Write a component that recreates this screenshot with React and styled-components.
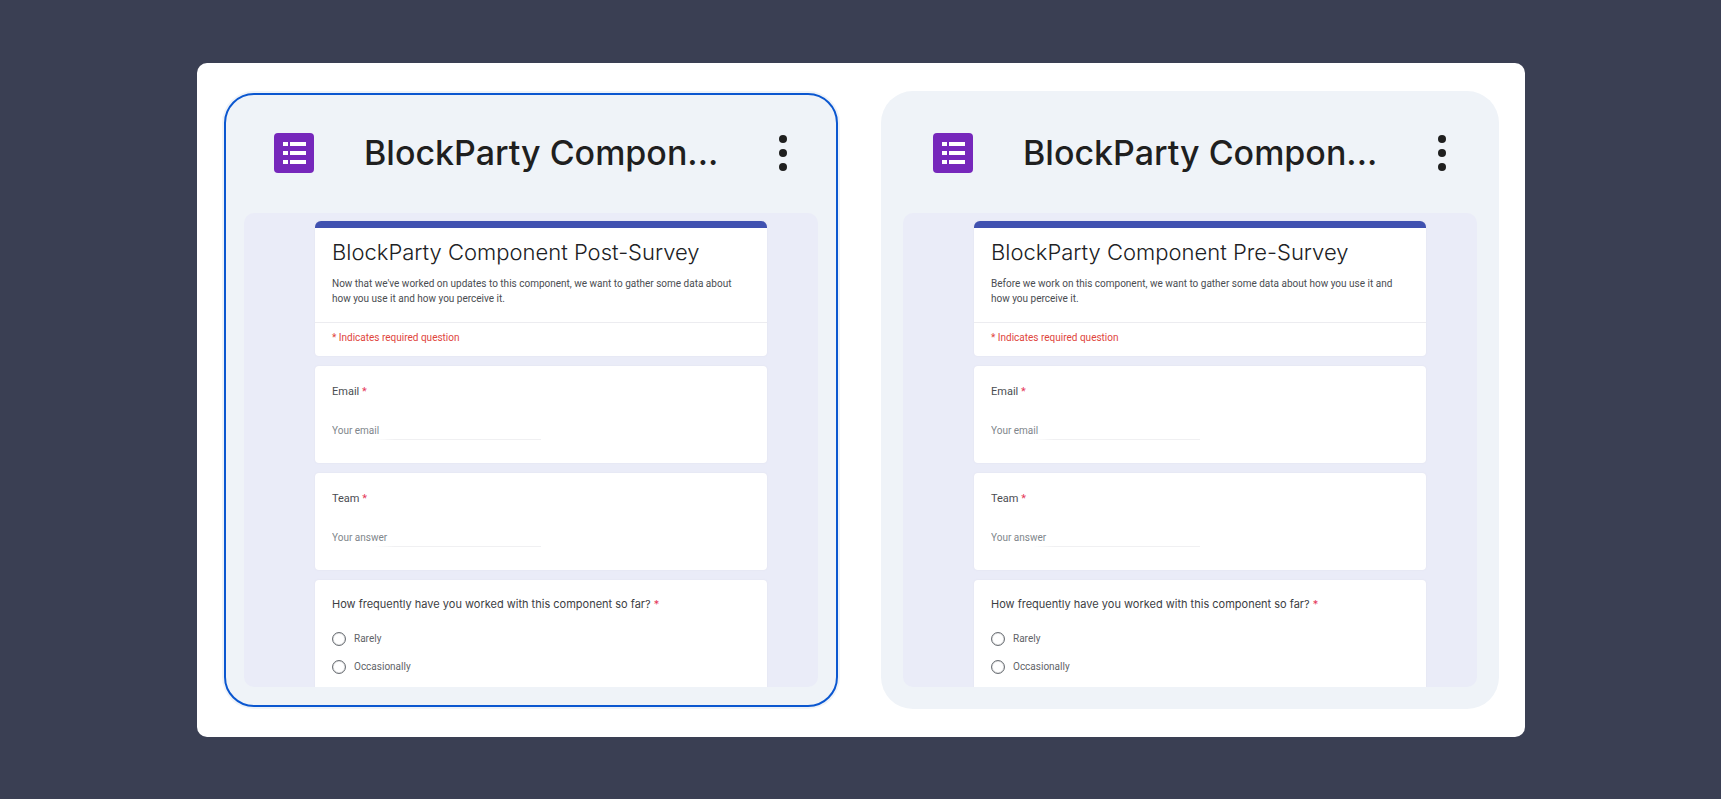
import React from 'react'
import styled, { createGlobalStyle, css } from 'styled-components'

const GlobalStyle = createGlobalStyle`
  *, *::before, *::after {
    box-sizing: border-box;
  }

  body {
    margin: 0;
    background: #3a3f53;
    font-family: Roboto, 'Liberation Sans', sans-serif;
  }

  h2, h3, p {
    margin: 0;
  }
`

const Page = styled.main`
  min-height: 100vh;
  padding: 63px 196px 62px 197px;
`

const Panel = styled.section`
  display: grid;
  grid-template-columns: repeat(2, minmax(0, 1fr));
  gap: 41px;
  padding: 28px 26px 28px 25px;
  border-radius: 10px;
  background: #fff;
`

const Card = styled.article`
  padding: 0 22px 22px;
  border-radius: 32px;
  background: #eff3f8;
  ${({ $selected }) =>
    $selected &&
    css`
      outline: 2px solid #0b57d0;
      outline-offset: -4px;
    `}
`

const CardHeader = styled.header`
  display: flex;
  align-items: center;
  height: 122px;
  padding: 2px 23px 0 30px;
`

const FormsIcon = styled.svg`
  flex: none;
  width: 40px;
  height: 40px;
`

const FileName = styled.h2`
  flex: 1;
  margin-left: 50px;
  color: #1f1f1f;
  font: 500 34px/44px Inter, 'Liberation Sans', sans-serif;
  white-space: nowrap;
`

const MenuButton = styled.button`
  display: flex;
  flex: none;
  padding: 0;
  border: 0;
  background: none;
  cursor: pointer;
`

const Preview = styled.div`
  aspect-ratio: 574 / 474;
  padding: 8px 51px 0 71px;
  overflow: hidden;
  border-radius: 10px;
  background: #eaecf8;
`

const Form = styled.form`
  display: flex;
  flex-direction: column;
  gap: 10px;
`

const Box = styled.div`
  padding: 19px 17px 0;
  border-radius: 4px;
  background: #fff;
  box-shadow: 0 0 2px #dfe1ec;
`

const Intro = styled(Box)`
  height: 135px;
  padding-top: 10px;
  border-top: 7px solid #4051b0;
  border-radius: 6px 6px 4px 4px;
`

const FieldBox = styled(Box)`
  height: 97px;
`

const ChoiceBox = styled(Box)`
  height: 140px;
  padding-top: 17px;
`

const FormTitle = styled.h3`
  color: #202124;
  font: 300 22px/28px Inter, sans-serif;
  white-space: nowrap;
`

const Description = styled.p`
  margin-top: 10px;
  color: #4a4d51;
  font-size: 10px;
  line-height: 15px;
`

const Required = styled.p`
  margin: 16px -17px 0;
  padding: 7px 17px 0;
  border-top: 1px solid #ececf0;
  color: #e0453c;
  font-size: 10px;
  line-height: 15px;
`

const FieldLabel = styled.label`
  display: block;
  color: #4a4d51;
  font-size: 11px;
  line-height: 14px;
`

const Question = styled.p`
  color: #3c4043;
  font: 11px/14px Inter, sans-serif;
`

const Star = styled.span`
  color: #e5395a;
`

const Field = styled.input`
  display: block;
  width: 50%;
  height: 20px;
  margin-top: 21px;
  padding: 0;
  border: 0;
  outline: 0;
  background: linear-gradient(90deg, transparent 20%, #f0f0f2 30%) bottom / 100% 1px no-repeat;
  color: #5f6368;
  font: 10px Roboto, sans-serif;

  &::placeholder {
    color: #80868b;
    opacity: 1;
  }
`

const Options = styled.div`
  display: flex;
  flex-direction: column;
  gap: 14px;
  margin-top: 21px;
`

const Option = styled.label`
  display: flex;
  align-items: center;
  gap: 8px;
  color: #5f6368;
  font-size: 10px;
  line-height: 14px;
`

const Radio = styled.input`
  appearance: none;
  width: 14px;
  height: 14px;
  margin: 0;
  border: 1px solid #6b6f74;
  border-radius: 50%;
  box-shadow: inset 0 0 1px #6b6f74;

  &:checked {
    background: radial-gradient(#4051b0 40%, transparent 45%);
  }
`

const files = [
  {
    id: 'post',
    title: 'BlockParty Component Post-Survey',
    description:
      "Now that we've worked on updates to this component, we want to gather some data about how you use it and how you perceive it.",
    selected: true,
  },
  {
    id: 'pre',
    title: 'BlockParty Component Pre-Survey',
    description:
      'Before we work on this component, we want to gather some data about how you use it and how you perceive it.',
  },
]

const fields = [
  { name: 'email', label: 'Email', placeholder: 'Your email' },
  { name: 'team', label: 'Team', placeholder: 'Your answer' },
]

const Survey = ({ id, title, description }) => (
  <Form>
    <Intro>
      <FormTitle>{title}</FormTitle>
      <Description>{description}</Description>
      <Required>* Indicates required question</Required>
    </Intro>
    {fields.map(({ name, label, placeholder }) => (
      <FieldBox key={name}>
        <FieldLabel htmlFor={`${id}-${name}`}>
          {label} <Star>*</Star>
        </FieldLabel>
        <Field id={`${id}-${name}`} name={name} placeholder={placeholder} />
      </FieldBox>
    ))}
    <ChoiceBox>
      <Question id={`${id}-question`}>
        How frequently have you worked with this component so far? <Star>*</Star>
      </Question>
      <Options role="radiogroup" aria-labelledby={`${id}-question`}>
        {['Rarely', 'Occasionally'].map((option) => (
          <Option key={option}>
            <Radio type="radio" name={`${id}-frequency`} value={option} />
            {option}
          </Option>
        ))}
      </Options>
    </ChoiceBox>
  </Form>
)

const FileCard = ({ file }) => (
  <Card $selected={file.selected}>
    <CardHeader>
      <FormsIcon viewBox="0 0 40 40" aria-hidden="true">
        <rect width="40" height="40" rx="4" fill="#7627bb" />
        <path
          fill="#fff"
          d="M9 9h5v4H9zM16 9h16v4H16zM9 18h5v4H9zM16 18h16v4H16zM9 27h5v4H9zM16 27h16v4H16z"
        />
      </FormsIcon>
      <FileName title={file.title}>BlockParty Compon...</FileName>
      <MenuButton type="button" aria-label="More actions">
        <svg width="24" height="40" viewBox="0 0 24 40" fill="#1f1f1f">
          <circle cx="12" cy="6" r="4" />
          <circle cx="12" cy="20" r="4" />
          <circle cx="12" cy="34" r="4" />
        </svg>
      </MenuButton>
    </CardHeader>
    <Preview>
      <Survey {...file} />
    </Preview>
  </Card>
)

const App = () => (
  <>
    <GlobalStyle />
    <Page>
      <Panel>
        {files.map((file) => (
          <FileCard key={file.id} file={file} />
        ))}
      </Panel>
    </Page>
  </>
)

export default App
